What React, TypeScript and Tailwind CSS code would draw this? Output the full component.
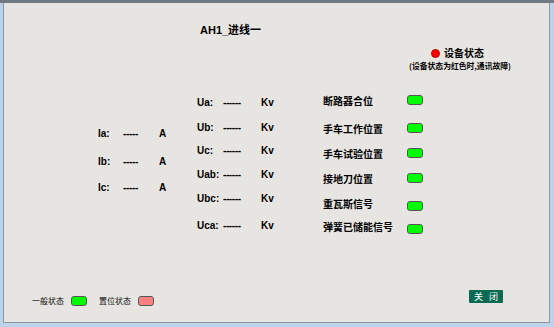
import React from "react";

const ARIAL = "font-['Liberation_Sans','Noto_Sans_CJK_SC',sans-serif]";
const CJK = "font-['Noto_Sans_CJK_SC',sans-serif]";

function Led({ color = "bg-[#00ff00]", extra = "" }: { color?: string; extra?: string }) {
  return (
    <div
      className={`w-[16px] h-[10px] rounded-[3px] border border-[#555555] ${color} ${extra}`}
    />
  );
}

function IRow({ label, mt }: { label: string; mt: string }) {
  return (
    <div className={`flex items-center h-[20px] ${mt} ${ARIAL} text-[10px] font-bold text-black`}>
      <span className="w-[25px]">{label}</span>
      <span className="w-[36px] tracking-[-0.3px]">-----</span>
      <span>A</span>
    </div>
  );
}

function URow({ label, mt }: { label: string; mt: string }) {
  return (
    <div className={`flex items-center h-[20px] ${mt} ${ARIAL} text-[10px] font-bold text-black`}>
      <span className="w-[26px]">{label}</span>
      <span className="w-[38px] tracking-[-0.4px]">------</span>
      <span>Kv</span>
    </div>
  );
}

function SRow({
  label,
  mt,
  labelCls = "",
  ledCls = "",
}: {
  label: string;
  mt: string;
  labelCls?: string;
  ledCls?: string;
}) {
  return (
    <div className={`flex items-center h-[20px] ${mt}`}>
      <span className={`w-[84px] ${CJK} text-[10px] leading-[12px] font-bold text-black ${labelCls}`}>
        {label}
      </span>
      <Led extra={ledCls} />
    </div>
  );
}

export default function App() {
  return (
    <div className="w-[554px] h-[327px] bg-[#bcd3ec] border-t-[3px] border-t-[#717a84] pl-[3px] pr-[4px] pb-[4px]">
      <div className="h-full flex flex-col border-l border-r border-b border-[#8f959b] bg-[#e7e5e1]">
        {/* title */}
        <div className={`pl-[196px] pt-[20px] h-[34px] ${ARIAL} text-[11px] leading-[14px] font-bold text-black`}>
          AH1_进线一
        </div>

        {/* device status */}
        <div className="mt-[10px] pl-[427px] flex items-center h-[12px] gap-[4px]">
          <div className="w-[9px] h-[9px] rounded-full bg-[#ff0000] border border-[#b00000]" />
          <span className={`${CJK} text-[10px] leading-[12px] font-bold text-black`}>设备状态</span>
        </div>
        <div className={`mt-[2px] pl-[405px] h-[10px] ${CJK} text-[7.8px] leading-[10px] font-bold text-black whitespace-nowrap`}>
          (设备状态为红色时,通讯故障)
        </div>

        {/* main */}
        <div className="mt-[19px] flex items-start">
          <div className="ml-[94px] w-[99px] flex flex-col">
            <IRow label="Ia:" mt="mt-[33px]" />
            <IRow label="Ib:" mt="mt-[8px]" />
            <IRow label="Ic:" mt="mt-[6px]" />
          </div>
          <div className="w-[126px] flex flex-col">
            <URow label="Ua:" mt="mt-[2px]" />
            <URow label="Ub:" mt="mt-[5px]" />
            <URow label="Uc:" mt="mt-[3px]" />
            <URow label="Uab:" mt="mt-[4px]" />
            <URow label="Ubc:" mt="mt-[4px]" />
            <URow label="Uca:" mt="mt-[7px]" />
          </div>
          <div className="flex flex-col">
            <SRow label="断路器合位" mt="mt-[1px]" ledCls="mb-[2px]" />
            <SRow label="手车工作位置" mt="mt-[8px]" ledCls="mb-[2px]" />
            <SRow label="手车试验位置" mt="mt-[5px]" ledCls="mb-[2px]" />
            <SRow label="接地刀位置" mt="mt-[5px]" ledCls="mb-[2px]" />
            <SRow label="重瓦斯信号" mt="mt-[6px]" labelCls="mb-[2px]" ledCls="mt-[2px]" />
            <SRow label="弹簧已储能信号" mt="mt-[3px]" labelCls="mb-[2px]" ledCls="mt-[2px]" />
          </div>
        </div>

        {/* footer */}
        <div className="mt-[52px] flex items-start">
          <div className={`ml-[28px] mt-[6px] flex items-center h-[10px] ${CJK} text-[8px] leading-[10px] text-[#111111]`}>
            <span className="w-[32px]">一般状态</span>
            <Led extra="ml-[7px]" />
            <span className="ml-[12px] w-[33px]">置位状态</span>
            <Led color="bg-[#ff8080]" extra="ml-[6px]" />
          </div>
          <div className={`ml-auto mr-[46px] w-[34px] h-[13px] bg-[#0a6b52] rounded-[1px] flex items-center justify-center gap-[6px] ${CJK} text-[9px] leading-[13px] text-white`}>
            <span>关</span>
            <span>闭</span>
          </div>
        </div>
      </div>
    </div>
  );
}
